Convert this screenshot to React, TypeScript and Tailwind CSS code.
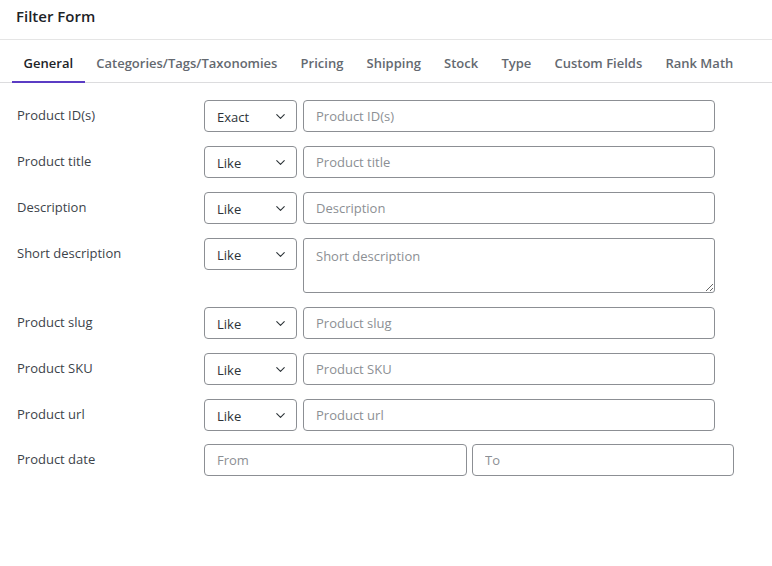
import { ChevronDown } from 'lucide-react';

const tabs = ['General', 'Categories/Tags/Taxonomies', 'Pricing', 'Shipping', 'Stock', 'Type', 'Custom Fields', 'Rank Math'];

type Row = { label: string; op: string; textarea?: boolean };

const rows: Row[] = [
  { label: 'Product ID(s)', op: 'Exact' },
  { label: 'Product title', op: 'Like' },
  { label: 'Description', op: 'Like' },
  { label: 'Short description', op: 'Like', textarea: true },
  { label: 'Product slug', op: 'Like' },
  { label: 'Product SKU', op: 'Like' },
  { label: 'Product url', op: 'Like' },
];

function OpSelect({ value }: { value: string }) {
  return (
    <div className="relative w-[93px] h-[32px] shrink-0">
      <select
        defaultValue={value}
        className="appearance-none w-full h-full border border-[#8c8f94] rounded-[4px] bg-white pl-[12px] pr-6 pt-[3px] text-[13px] text-[#2c3338] outline-none"
      >
        <option>Exact</option>
        <option>Like</option>
      </select>
      <ChevronDown size={15} strokeWidth={1.75} className="absolute right-[9px] top-[9px] text-[#2c3338] pointer-events-none" />
    </div>
  );
}

export default function App() {
  return (
    <div className="bg-white min-h-screen text-[13px] text-[#3c434a]" style={{ fontFamily: '"Open Sans", "Noto Sans", sans-serif' }}>
      <div className="h-[40px] border-b border-[#e5e5e5] flex items-center px-4">
        <h1 className="text-[15px] font-semibold text-[#1d2327] -mt-[6px]">Filter Form</h1>
      </div>

      <div className="flex h-[43px] border-b border-[#dcdcde] pl-[12px]">
        {tabs.map((t, i) => (
          <div
            key={t}
            className={
              'px-[11.6px] flex items-center text-[13px] font-semibold pt-[6px] -mb-px ' +
              (i === 0 ? 'text-[#1d2327] border-b-2 border-[#5b3cc4]' : 'text-[#646970] border-b-2 border-transparent')
            }
          >
            {t}
          </div>
        ))}
      </div>

      <div className="pl-[17px] pt-[17px] flex flex-col gap-[14px]">
        {rows.map(r => (
          <div key={r.label} className="flex items-start">
            <div className="w-[187px] shrink-0 pt-[5px] leading-[20px]">{r.label}</div>
            <OpSelect value={r.op} />
            {r.textarea ? (
              <textarea
                placeholder={r.label}
                className="ml-[6px] w-[412px] h-[55px] border border-[#8c8f94] rounded-[3px] px-[12px] py-[7px] text-[13px] text-[#2c3338] placeholder-[#8c8f94] outline-none leading-[20px]"
              />
            ) : (
              <input
                type="text"
                placeholder={r.label}
                className="ml-[6px] w-[412px] h-[32px] border border-[#8c8f94] rounded-[4px] px-[12px] text-[13px] text-[#2c3338] placeholder-[#8c8f94] outline-none"
              />
            )}
          </div>
        ))}
        <div className="flex items-start -mt-px">
          <div className="w-[187px] shrink-0 pt-[5px] leading-[20px]">Product date</div>
          <input
            type="text"
            placeholder="From"
            className="w-[263px] h-[32px] border border-[#8c8f94] rounded-[4px] px-[12px] text-[13px] placeholder-[#8c8f94] outline-none"
          />
          <input
            type="text"
            placeholder="To"
            className="ml-[5px] w-[262px] h-[32px] border border-[#8c8f94] rounded-[4px] px-[12px] text-[13px] placeholder-[#8c8f94] outline-none"
          />
        </div>
      </div>
    </div>
  );
}
